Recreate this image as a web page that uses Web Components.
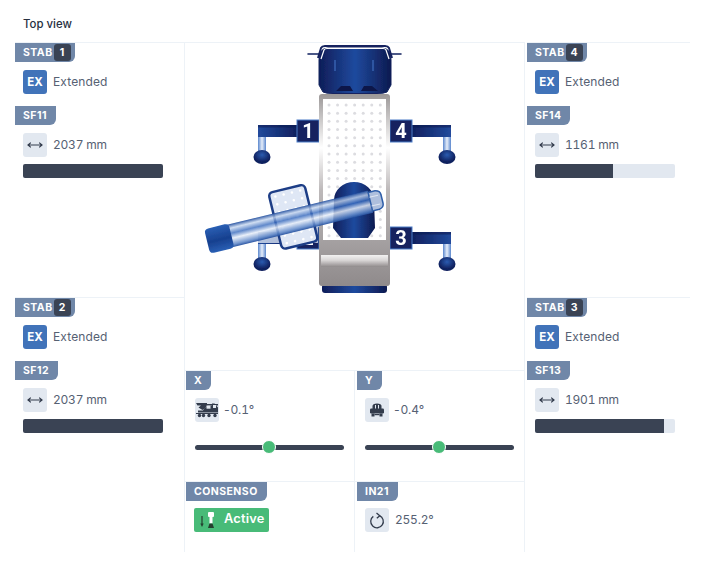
<!doctype html>
<html lang="en"><head><meta charset="utf-8"><title>Top view</title>
<style>
html,body{margin:0;background:#fff}
body{font-family:Inter,"Noto Sans",sans-serif}
</style></head><body>
<x-app></x-app>
<script>
const ICONS={
 arrows:'<svg width="16" height="8" viewBox="0 0 16 8" fill="none" stroke="#333c4c" stroke-width="1.2"><path d="M1 4h14M3.800 1.600 1 4l2.800 2.400M12.200 1.600 15 4l-2.800 2.400"/></svg>',
 crane:'<svg width="24" height="16" viewBox="0 0 24 16" fill="#333c4c"><path d="M1 1h11v1H23v1.500H13L7.500 8 3.500 5.500 6 3.500H2.500z"/><path d="M9 6.500 13 3.500H17V1.500h2.500L23 5.500V10.500H3V8.500H8z"/><rect x="11.500" y="3.500" width="4" height="3.200" fill="#e2e8f0"/><rect x="18" y="3" width="3" height="3" fill="#e2e8f0"/><rect x="1" y="11" width="22" height="1"/><circle cx="4.500" cy="13.500" r="1.700"/><circle cx="8.500" cy="13.500" r="1.700"/><circle cx="14" cy="13.500" r="1.700"/><circle cx="20" cy="13.500" r="1.700"/></svg>',
 rear:'<svg width="16" height="16" viewBox="0 0 16 16" fill="#333c4c"><path d="M3.500 4Q3.500 1.500 8 1.500T12.500 4V10H3.500z"/><rect x="6" y="3" width="1" height="5" fill="#e2e8f0"/><rect x="9" y="3" width="1" height="5" fill="#e2e8f0"/><rect x="1" y="6.500" width="14" height="5" rx="1.200"/><rect x="2.500" y="11.500" width="3" height="3"/><rect x="10.500" y="11.500" width="3" height="3"/><rect x="5.500" y="12" width="5" height="1.200"/></svg>',
 rotate:'<svg width="16" height="17" viewBox="0 0 16 17" fill="none" stroke="#333c4c" stroke-width="1.300"><path d="M10.500 3.700A6.300 6.300 0 1 1 4.300 4.400"/><path d="M7.500 1 10.800 3.700 7.800 6.300" stroke-linejoin="round"/></svg>',
 sensor:'<svg width="20" height="20" viewBox="0 0 20 20"><path d="M5 6v9" stroke="#25402f" stroke-width="1.200"/><path d="M3.300 13.500h3.400L5 17z" fill="#25402f"/><rect x="11" y="2" width="6" height="5" rx="1" fill="#fff"/><rect x="12.500" y="7" width="3" height="6.500" fill="#fff"/><path d="M12.500 13.500h3l1.500 4.500h-6z" fill="#25402f"/></svg>'
};
function def(name,css,html){
 customElements.define(name,class extends HTMLElement{
  connectedCallback(){
   if(this.shadowRoot)return;
   const s=this.attachShadow({mode:'open'});
   s.innerHTML='<style>'+css+'</style>'+(typeof html==='function'?html(this):html);
  }
 });
}
def('x-tag',`:host{display:flex;width:max-content;align-items:center;height:19px;padding:0 9px 0 8px;background:#7087a8;border-radius:0 0 6px 0;color:#fff;font:700 10.500px/19px Inter,sans-serif;letter-spacing:.45px}
 b{display:block;margin-left:1px;width:17px;height:17px;border-radius:3px;background:#3a4354;text-align:center;line-height:17px;font-weight:700;letter-spacing:0}
 :host([n]){padding-right:4px}`,
 el=>'<span><slot></slot></span>'+(el.getAttribute('n')?'<b>'+el.getAttribute('n')+'</b>':''));
def('x-box',`:host{display:flex;width:24px;height:24px;flex:none;align-items:center;justify-content:center;border-radius:3px;background:#e2e8f0;overflow:hidden}
 :host([blue]){background:#4173b9;color:#fff;font:700 11.500px Inter,sans-serif}`,'<slot></slot>');
def('x-value',`:host{display:flex;align-items:center;gap:6px;height:24px;color:#566173;font:400 12px Inter,sans-serif;letter-spacing:.12px;font-variant-numeric:tabular-nums}
 :host([icon]){letter-spacing:-.22px}
 span{padding-bottom:2px}`,
 el=>{const i=el.getAttribute('icon');return '<x-box '+(i?'':'blue')+'>'+(i?ICONS[i]:'EX')+'</x-box><span><slot></slot></span>'});
def('x-bar',`:host{display:block;width:140px;height:14px;border-radius:2px;background:#e2e8f0;overflow:hidden}
 i{display:block;height:100%;background:#3a4354}`,el=>'<i style="width:'+el.getAttribute('pct')+'%"></i>');
def('x-stab',`:host{display:block;border-top:1px solid #edf2f7}
 .c{padding-left:8px}
 .a{margin-top:8px}
 .g{height:12px}
 x-bar{margin-top:7px}`,
 el=>`<x-tag n="${el.getAttribute('n')}">STAB</x-tag><div class="c a"><x-value>Extended</x-value></div><div class="g"></div>
 <x-tag>${el.getAttribute('sf')}</x-tag><div class="c a"><x-value icon="arrows">${el.getAttribute('mm')} mm</x-value><x-bar pct="${el.getAttribute('pct')}"></x-bar></div>`);
def('x-level',`:host{display:block}
 .c{padding:8px 0 0 var(--inset,8px)}
 x-value{gap:4px}
 .t{position:relative;width:149px;height:5px;margin-top:23px;border-radius:3px;background:#3a4354}
 .t i{position:absolute;top:-5px;width:12px;height:12px;margin-left:-7.500px;border-radius:50%;background:#48bb78;border:1.500px solid #fff}`,
 el=>`<x-tag>${el.getAttribute('label')}</x-tag><div class="c"><x-value icon="${el.getAttribute('icon')}">${el.getAttribute('v')}</x-value><div class="t"><i style="left:${el.getAttribute('at')}px"></i></div></div>`);
def('x-status',`:host{display:flex;align-items:center;height:24px;width:75px;box-sizing:border-box;padding-left:3px;gap:7px;border-radius:2px;background:#48bb78;color:#fff;font:600 12.800px Inter,sans-serif;letter-spacing:.2px}
 span{padding-bottom:3px}
 svg{display:block}`,ICONS.sensor+'<span><slot></slot></span>');
const dots=(x0,y0,nx,ny,dx,dy,r,c)=>{let o='';for(let j=0;j<ny;j++)for(let i=0;i<nx;i++)o+=`<circle cx="${x0+i*dx}" cy="${(y0+j*dy).toFixed(1)}" r="${r}"/>`;return `<g fill="${c}">${o}</g>`};
const outrigger=(lx,ly,n,side)=>{
 const bar=side<0?lx-39:lx+22, leg=side<0?lx-39:lx+53, foot=side<0?lx-35:lx+57;
 return `<rect x="${bar}" y="${ly+5}" width="39" height="12" fill="url(#bar${side<0?'L':'R'})"/>
 <rect x="${bar}" y="${ly+5}" width="39" height="2.500" fill="#0d1a4f" opacity=".55"/>
 <rect x="${leg}" y="${ly+17}" width="8" height="16" fill="url(#leg)"/>
 <ellipse cx="${foot}" cy="${ly+37}" rx="8.500" ry="7" fill="url(#foot)"/>
 <rect x="${lx}" y="${ly}" width="22" height="22" fill="#14245f" stroke="#4a7cc8" stroke-width="1"/>
 <text x="${lx+11}" y="${ly+18}" text-anchor="middle" font-family="Roboto,'Liberation Sans',sans-serif" font-weight="700" font-size="20" fill="#fff">${n}</text>`};
def('x-truck',`:host{display:block;height:327px}svg{display:block}`,
 `<svg width="340" height="327" viewBox="185 43 340 327">
 <defs>
 <filter id="soft" x="-5%" y="-5%" width="110%" height="110%"><feGaussianBlur stdDeviation=".4"/></filter>
 <linearGradient id="cab"><stop offset="0" stop-color="#0f1d58"/><stop offset=".5" stop-color="#1f4a9e"/><stop offset="1" stop-color="#0d1a50"/></linearGradient>
 <linearGradient id="body" x2="0" y2="1"><stop offset="0" stop-color="#9b9797"/><stop offset=".28" stop-color="#fff"/><stop offset=".5" stop-color="#bdb9ba"/><stop offset="1" stop-color="#8f8a8b"/></linearGradient>
 <linearGradient id="band" x2="0" y2="1"><stop offset="0" stop-color="#f2f1f1"/><stop offset=".45" stop-color="#d8d5d5"/><stop offset="1" stop-color="#8f8a8b"/></linearGradient>
 <linearGradient id="barL"><stop offset="0" stop-color="#214a9c"/><stop offset="1" stop-color="#10205e"/></linearGradient>
 <linearGradient id="barR"><stop offset="0" stop-color="#10205e"/><stop offset="1" stop-color="#214a9c"/></linearGradient>
 <linearGradient id="leg"><stop offset="0" stop-color="#5b87cd"/><stop offset=".5" stop-color="#e6eefa"/><stop offset="1" stop-color="#5b87cd"/></linearGradient>
 <radialGradient id="foot" cy=".35"><stop offset="0" stop-color="#2b5cb0"/><stop offset="1" stop-color="#10205e"/></radialGradient>
 <linearGradient id="boom" x2="0" y2="1"><stop offset="0" stop-color="#24509f" stop-opacity=".95"/><stop offset=".18" stop-color="#c4d5ee" stop-opacity=".8"/><stop offset=".4" stop-color="#3a6cbe" stop-opacity=".8"/><stop offset=".62" stop-color="#e6edf8" stop-opacity=".85"/><stop offset=".88" stop-color="#5f88c9" stop-opacity=".85"/><stop offset="1" stop-color="#24509f" stop-opacity=".95"/></linearGradient>
 <linearGradient id="capg" x2="0" y2="1"><stop offset="0" stop-color="#2a5fb4"/><stop offset=".55" stop-color="#17408f"/><stop offset="1" stop-color="#2a5fb4"/></linearGradient>
 </defs>
 <g filter="url(#soft)">
 <path d="M308 54h11M391 54h10" stroke="#14245f" stroke-width="1.600" stroke-linecap="round"/>
 <path d="M318 58 321 48q1-2 4-2h60q3 0 4 2L392 58" fill="none" stroke="#14245f" stroke-width="2"/>
 <path d="M319 60q0-12 9-12h54q9 0 9 12V85l-4 7q-3 1.500-10 1.500H333q-7 0-10-1.500l-4-7z" fill="url(#cab)" stroke="#14245f" stroke-width="1"/>
 <path d="M321 59 324 50q.500-1.500 3-1.500h56q2.500 0 3 1.500L389 59" fill="none" stroke="#fff" stroke-width="1.200"/>
 <path d="M335 60v11M373 60v11" stroke="#3b67b8" stroke-width="1.300"/>
 <path d="M336 91l5-5h9l3 5zM361 91l3-5h8l6 5z" fill="#0c1848"/>
 <rect x="322" y="284" width="65" height="9" rx="3" fill="url(#cab)"/>
 ${outrigger(297,120,1,-1)}${outrigger(390,120,4,1)}${outrigger(297,227,2,-1)}${outrigger(390,227,3,1)}
 <rect x="319" y="94" width="71" height="192" rx="3" fill="url(#body)"/>
 <rect x="323" y="99" width="63" height="141" fill="#fff"/>
 ${dots(329,105,7,17,8.550,8.170,1.500,'#dcdce0')}
 <rect x="321" y="255" width="67" height="12" fill="url(#band)"/>
 <path d="M334 200a20 18 0 0 1 40 0L375 228l-7 10H341l-8-10z" fill="url(#cab)"/>
 <rect x="258" y="226" width="60" height="17" fill="#e6edf8" opacity=".75"/>
 <g transform="translate(207 241) rotate(-13.700)">
  <rect x="71" y="-32" width="37" height="58" rx="4" fill="#dfe7f5" stroke="#1d3d86" stroke-width="2.500"/>
  ${dots(77,-27,4,7,8.500,8,1.300,'#fff')}
  <rect x="20" y="-11" width="148" height="23" fill="url(#boom)"/>
  <path d="M168-9h7q5 1 5 5v9q0 4-5 5h-7z" fill="#aebfdd" stroke="#2f5ea9" stroke-width="1.500"/>
  <path d="M168-4h9M168 5h9" stroke="#fff" stroke-width="1" opacity=".6"/>
  <rect x="0" y="-12" width="25" height="25" rx="4" fill="url(#capg)"/>
 </g>
 </g>
 </svg>`);
def('x-app',`:host{display:block;width:675px;padding-left:15px;color:#1f2a3d}
 h1{margin:0;height:42px;box-sizing:border-box;padding:17px 0 0 8px;font:500 11.400px/14px Inter,sans-serif;color:#27303f}
 .g{display:grid;grid-template-columns:170px 340px 165px;height:510px}
 .l{border-right:1px solid #edf2f7;display:grid;grid-template-rows:255px 255px}
 .r{display:grid;grid-template-rows:255px 255px}
 .r x-stab{margin-left:2px}
 .m{display:grid;grid-template-rows:327px 111px 71px;grid-template-columns:170px 170px;border-right:1px solid #edf2f7;border-top:1px solid #edf2f7;box-sizing:border-box}
 .d{grid-column:1/3}
 .cell{border-top:1px solid #edf2f7;box-sizing:border-box;padding-left:1px}
 .cell.a{border-right:1px solid #edf2f7}
 .cell.b{padding-left:2px}
 .c2{padding:7px 0 0 8px}
 .cell.a x-level{--inset:9px}
 `,`<h1>Top view</h1>
 <div class="g">
  <div class="l">
   <x-stab n="1" sf="SF11" mm="2037" pct="100"></x-stab>
   <x-stab n="2" sf="SF12" mm="2037" pct="100"></x-stab>
  </div>
  <div class="m">
   <div class="d"><x-truck></x-truck></div>
   <div class="cell a"><x-level label="X" icon="crane" v="-0.1°" at="74"></x-level></div>
   <div class="cell b"><x-level label="Y" icon="rear" v="-0.4°" at="74"></x-level></div>
   <div class="cell a"><x-tag>CONSENSO</x-tag><div class="c2"><x-status>Active</x-status></div></div>
   <div class="cell b"><x-tag>IN21</x-tag><div class="c2"><x-value icon="rotate">255.2°</x-value></div></div>
  </div>
  <div class="r">
   <x-stab n="4" sf="SF14" mm="1161" pct="56"></x-stab>
   <x-stab n="3" sf="SF13" mm="1901" pct="92"></x-stab>
  </div>
 </div>`);
</script></body></html>
